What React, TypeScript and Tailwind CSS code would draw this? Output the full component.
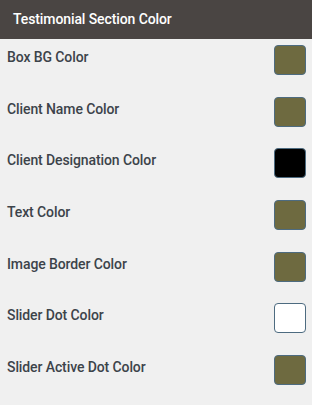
import React from "react";

const rows = [
  { label: "Box BG Color", color: "bg-[#6e6a40]" },
  { label: "Client Name Color", color: "bg-[#6e6a40]" },
  { label: "Client Designation Color", color: "bg-black" },
  { label: "Text Color", color: "bg-[#6e6a40]" },
  { label: "Image Border Color", color: "bg-[#6e6a40]" },
  { label: "Slider Dot Color", color: "bg-white" },
  { label: "Slider Active Dot Color", color: "bg-[#6e6a40]" },
];

export default function App() {
  return (
    <div className="w-[312px] h-[405px] bg-[#f0f0f0] font-['Roboto',sans-serif]">
      <div className="h-[39px] bg-[#4a4543] flex items-center px-[13px]">
        <span className="text-white text-[14px] font-medium tracking-[-0.1px]">
          Testimonial Section Color
        </span>
      </div>
      <div className="flex flex-col">
        {rows.map((row, i) => (
          <div key={i} className="h-[51.67px] flex items-start justify-between px-[6px] pt-[6px]">
            <span className="text-[14px] font-medium text-[#3c434a] tracking-[-0.1px] leading-[24px] pl-px">
              {row.label}
            </span>
            <div className={`w-[32px] h-[30px] rounded-[4px] border-[1.5px] border-[#4d6b80] ${row.color}`} />
          </div>
        ))}
      </div>
    </div>
  );
}
